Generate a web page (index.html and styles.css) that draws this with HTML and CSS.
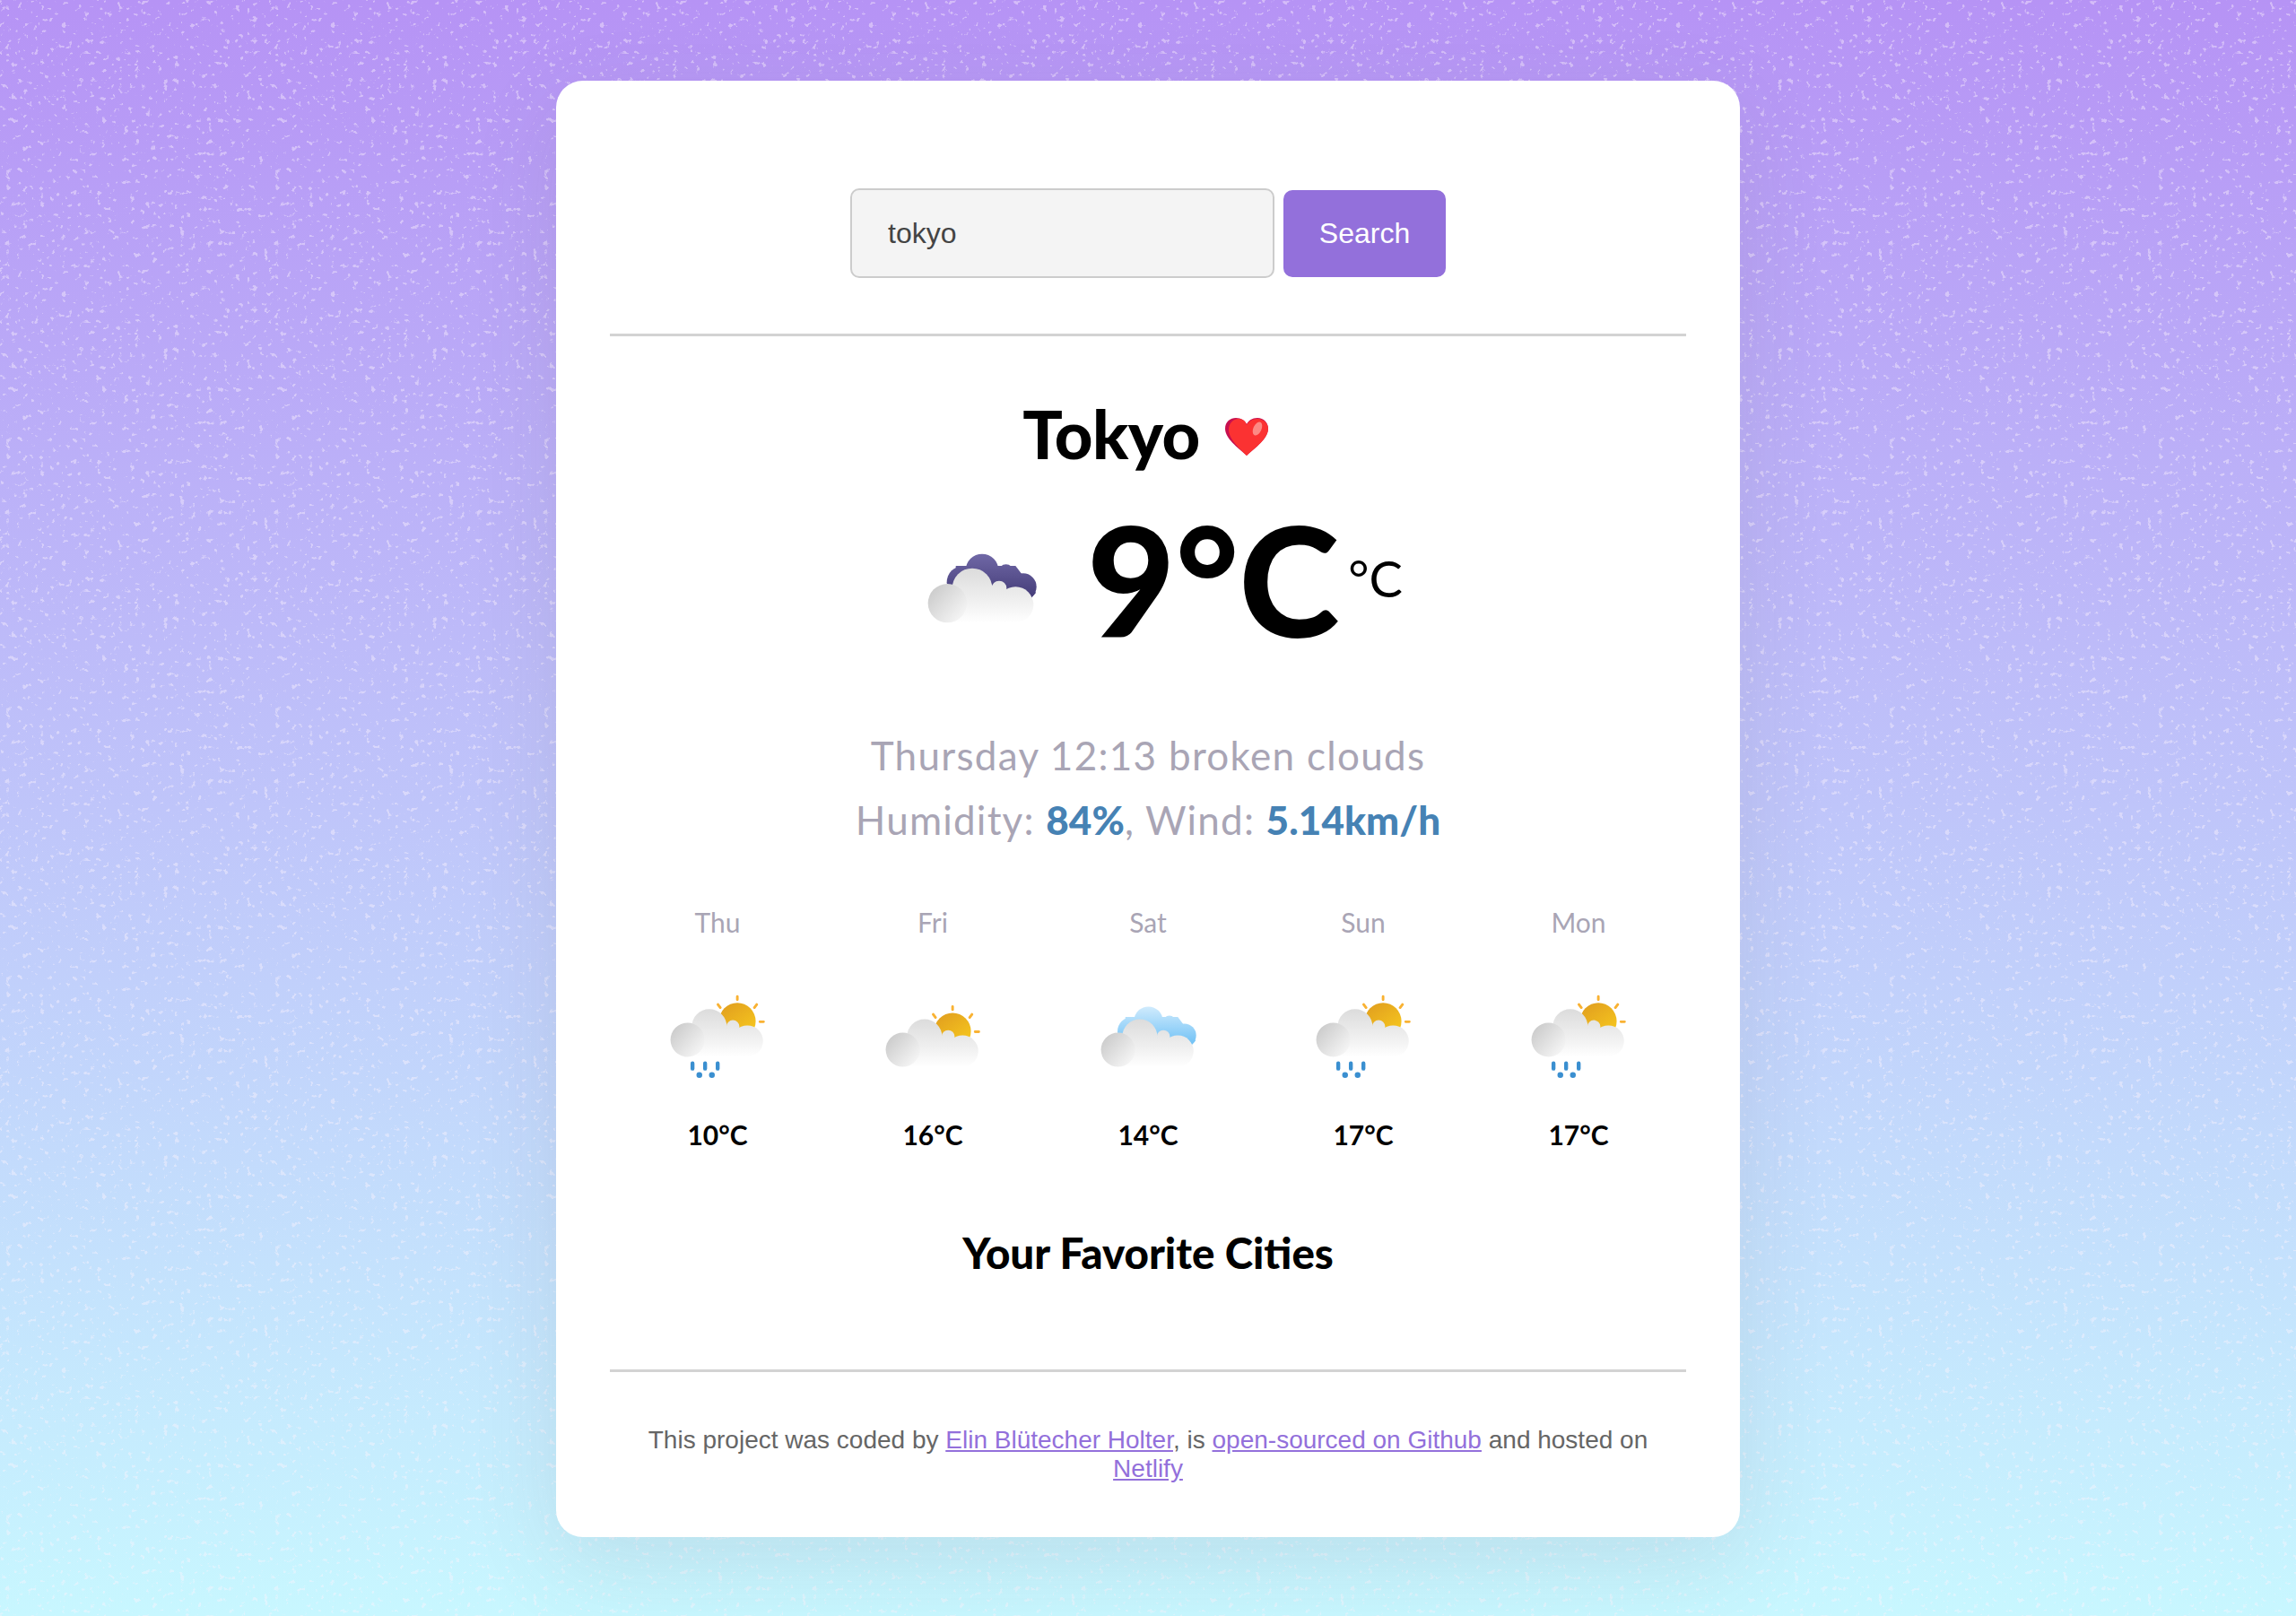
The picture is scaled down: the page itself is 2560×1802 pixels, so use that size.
FILE: index.html
```html
<!DOCTYPE html>
<html lang="en">
<head>
<meta charset="utf-8">
<title>Weather App</title>
<link rel="stylesheet" href="styles.css">
</head>
<body>
<svg class="defs" width="0" height="0" aria-hidden="true">
  <defs>
    <linearGradient id="g-front" gradientUnits="userSpaceOnUse" x1="0" y1="130" x2="0" y2="310">
      <stop offset="0" stop-color="#dcdcdc"/><stop offset=".6" stop-color="#f0f0f0"/><stop offset="1" stop-color="#ffffff"/>
    </linearGradient>
    <linearGradient id="g-ball" gradientUnits="userSpaceOnUse" x1="120" y1="195" x2="232" y2="295">
      <stop offset="0" stop-color="#cbcbcb"/><stop offset="1" stop-color="#f8f8f8"/>
    </linearGradient>
    <linearGradient id="g-purple" gradientUnits="userSpaceOnUse" x1="0" y1="80" x2="0" y2="230">
      <stop offset="0" stop-color="#7068a6"/><stop offset="1" stop-color="#433b77"/>
    </linearGradient>
    <linearGradient id="g-blue" gradientUnits="userSpaceOnUse" x1="0" y1="80" x2="0" y2="230">
      <stop offset="0" stop-color="#d0ebfd"/><stop offset="1" stop-color="#6dc0f5"/>
    </linearGradient>
    <linearGradient id="g-sun" gradientUnits="userSpaceOnUse" x1="320" y1="110" x2="410" y2="240">
      <stop offset="0" stop-color="#e2a11f"/><stop offset="1" stop-color="#f8ca1e"/>
    </linearGradient>
    <symbol id="front" viewBox="0 0 600 390" overflow="visible">
      <g fill="url(#g-front)">
        <circle cx="255" cy="195" r="67"/>
        <circle cx="345" cy="195" r="25"/>
        <circle cx="400" cy="250" r="60"/>
        <rect x="172" y="200" width="228" height="110"/>
      </g>
      <circle cx="172" cy="245" r="65" fill="url(#g-ball)"/>
    </symbol>
    <symbol id="back" viewBox="0 0 600 390" overflow="visible">
      <circle cx="225" cy="175" r="55"/>
      <circle cx="288" cy="135" r="55"/>
      <circle cx="368" cy="140" r="25"/>
      <circle cx="425" cy="190" r="45"/>
      <path d="M200 120h200l68 90-18 20H200z"/>
    </symbol>
    <symbol id="sun" viewBox="0 0 600 390" overflow="visible">
      <circle cx="362" cy="174" r="70" fill="url(#g-sun)"/>
      <g stroke="#f9b233" stroke-width="10" stroke-linecap="round">
        <path d="M362 80v12M288 110l9 12M436 110l-9 12M448 176h14"/>
      </g>
    </symbol>
    <symbol id="rain" viewBox="0 0 600 390" overflow="visible">
      <g stroke="#3a8fd0" stroke-width="15" stroke-linecap="round">
        <path d="M191 297v20M239 297v20M287 297v20"/>
      </g>
      <circle cx="217" cy="341" r="11" fill="#3a8fd0"/>
      <circle cx="265" cy="341" r="11" fill="#3a8fd0"/>
    </symbol>
  </defs>
</svg>
<main class="card">
  <form class="search">
    <input class="search-input" type="text" value="tokyo" aria-label="City">
    <button class="search-button" type="button">Search</button>
  </form>
  <hr class="rule rule-top">
  <div class="city">
    <h1 class="city-name">Tokyo</h1>
    <svg class="heart" viewBox="0 0 48 42" aria-label="Favorite">
      <path d="M24 42C14 33 0 23 0 12 0 4 6 0 12 0c6 0 10 3 12 7 2-4 6-7 12-7 7 0 12 5 12 12 0 11-14 21-24 30z" fill="#c8104f"/>
      <path d="M24 42C17 35 4 24 4 13 4 6 9 1 15 1c5 0 8 3 9 7 2-4 6-7 12-7 7 0 12 5 12 11 0 11-14 21-24 30z" fill="#fb3232"/>
      <ellipse cx="36" cy="12" rx="4.500" ry="8" transform="rotate(25 36 12)" fill="#fc8a84"/>
    </svg>
  </div>
  <div class="current">
    <svg class="current-icon" viewBox="0 0 600 390">
      <use href="#back" width="600" height="390" fill="url(#g-purple)"/>
      <use href="#front" width="600" height="390"/>
    </svg>
    <span class="current-temp">9°C</span>
    <span class="current-unit">°C</span>
  </div>
  <p class="desc desc-date">Thursday 12:13 broken clouds</p>
  <p class="desc desc-stats">Humidity: <strong class="stat">84%</strong>, Wind: <strong class="stat">5.14km/h</strong></p>
  <section class="forecast">
    <div class="day">
      <div class="day-name">Thu</div>
      <svg class="day-icon" viewBox="0 0 600 390">
        <g transform="translate(0 -38)"><use href="#sun" width="600" height="390"/><use href="#front" width="600" height="390"/></g>
        <use href="#rain" width="600" height="390"/>
      </svg>
      <div class="day-temp">10°C</div>
    </div>
    <div class="day">
      <div class="day-name">Fri</div>
      <svg class="day-icon" viewBox="0 0 600 390">
        <use href="#sun" width="600" height="390"/><use href="#front" width="600" height="390"/>
      </svg>
      <div class="day-temp">16°C</div>
    </div>
    <div class="day">
      <div class="day-name">Sat</div>
      <svg class="day-icon" viewBox="0 0 600 390">
        <use href="#back" width="600" height="390" fill="url(#g-blue)"/><use href="#front" width="600" height="390"/>
      </svg>
      <div class="day-temp">14°C</div>
    </div>
    <div class="day">
      <div class="day-name">Sun</div>
      <svg class="day-icon" viewBox="0 0 600 390">
        <g transform="translate(0 -38)"><use href="#sun" width="600" height="390"/><use href="#front" width="600" height="390"/></g>
        <use href="#rain" width="600" height="390"/>
      </svg>
      <div class="day-temp">17°C</div>
    </div>
    <div class="day">
      <div class="day-name">Mon</div>
      <svg class="day-icon" viewBox="0 0 600 390">
        <g transform="translate(0 -38)"><use href="#sun" width="600" height="390"/><use href="#front" width="600" height="390"/></g>
        <use href="#rain" width="600" height="390"/>
      </svg>
      <div class="day-temp">17°C</div>
    </div>
  </section>
  <h2 class="favorites">Your Favorite Cities</h2>
  <hr class="rule rule-bottom">
  <footer class="credit">This project was coded by <a href="#">Elin Blütecher Holter</a>, is <a href="#">open-sourced on Github</a> and hosted on <a href="#">Netlify</a></footer>
</main>
</body>
</html>
```
FILE: styles.css
```css
html { height: 100%; }
body {
  margin: 0;
  height: 1802px;
  box-sizing: border-box;
  padding: 90px 0 0;
  overflow: hidden;
  display: flex;
  flex-direction: column;
  align-items: center;
  font-family: "Lato", "Liberation Sans", sans-serif;
  background-image:
    url("data:image/svg+xml,%3Csvg xmlns='http://www.w3.org/2000/svg' width='300' height='300'%3E%3Cfilter id='n' x='0' y='0' width='100%25' height='100%25'%3E%3CfeTurbulence type='fractalNoise' baseFrequency='.16' numOctaves='3' seed='11' stitchTiles='stitch'/%3E%3CfeColorMatrix values='0 0 0 0 .98 0 0 0 0 .9 0 0 0 0 .98 12 0 0 0 -7.900'/%3E%3C/filter%3E%3Crect width='300' height='300' filter='url(%23n)' opacity='.42'/%3E%3C/svg%3E"),
    linear-gradient(180deg, #b693f5 0%, #c8f7ff 100%);
  background-size: 300px 300px, 100% 100%;
  background-repeat: repeat, no-repeat;
}
.defs { position: absolute; }
.card {
  box-sizing: border-box;
  flex: none;
  width: 1320px;
  height: 1624px;
  padding: 120px 60px 0;
  background: #fff;
  border-radius: 30px;
  box-shadow: 0 30px 100px rgba(85, 85, 85, .11);
}
.search {
  display: flex;
  justify-content: center;
  align-items: center;
  gap: 10px;
  height: 100px;
}
.search-input {
  box-sizing: border-box;
  width: 473px;
  height: 100px;
  padding: 0 40px;
  font: 32px "Liberation Sans", sans-serif;
  color: #444;
  background: #f4f4f4;
  border: 2px solid #ccc;
  border-radius: 10px;
}
.search-button {
  width: 181px;
  height: 97px;
  padding: 0;
  font: 32px "Liberation Sans", sans-serif;
  color: #fff;
  background: #9370db;
  border: 0;
  border-radius: 10px;
}
.rule {
  height: 3px;
  margin: 0;
  border: 0;
  background: #d3d3d3;
}
.rule-top { margin-top: 62px; }
.city {
  display: flex;
  justify-content: center;
  align-items: center;
  gap: 28px;
  margin-top: 69px;
  height: 80px;
}
.city-name {
  margin: 0;
  font-size: 74px;
  line-height: 80px;
  font-weight: 900;
  color: #000;
  letter-spacing: -.5px;
}
.heart { width: 48px; height: 42px; margin-top: 6px; margin-right: 6px; }
.current {
  display: flex;
  justify-content: center;
  align-items: center;
  margin-top: 36px;
  height: 170px;
}
.current-icon { width: 200px; height: 130px; margin: 22px 13px 0 3px; }
.current-temp {
  font-size: 170px;
  line-height: 170px;
  font-weight: 900;
  color: #000;
}
.current-unit {
  margin-left: 10px;
  font-size: 56px;
  line-height: 60px;
  font-weight: 400;
  color: #000;
}
.desc {
  margin: 0;
  text-align: center;
  font-size: 44px;
  line-height: 72px;
  color: #a9a5b5;
}
.desc-date { margin-top: 76px; letter-spacing: 1.300px; }
.desc-stats { letter-spacing: 1.200px; }
.stat { font-weight: 900; color: #4682b4; letter-spacing: .1px; }
.forecast {
  display: grid;
  grid-template-columns: repeat(5, 1fr);
  margin-top: 58px;
}
.day {
  display: flex;
  flex-direction: column;
  align-items: center;
}
.day-name {
  font-size: 30px;
  line-height: 40px;
  color: #a9a5b5;
}
.day-icon { width: 176px; height: 114px; margin-top: 51px; margin-left: 8px; }
.day-temp {
  margin-top: 32px;
  font-size: 30px;
  line-height: 40px;
  font-weight: 700;
  color: #000;
}
.favorites {
  margin: 82px 0 0;
  text-align: center;
  font-size: 47.500px;
  line-height: 60px;
  font-weight: 900;
  color: #000;
}
.rule-bottom { margin-top: 100px; }
.credit {
  margin-top: 60px;
  text-align: center;
  font: 28px/32px "Liberation Sans", sans-serif;
  color: #666;
}
.credit a { color: #9370db; }
```
